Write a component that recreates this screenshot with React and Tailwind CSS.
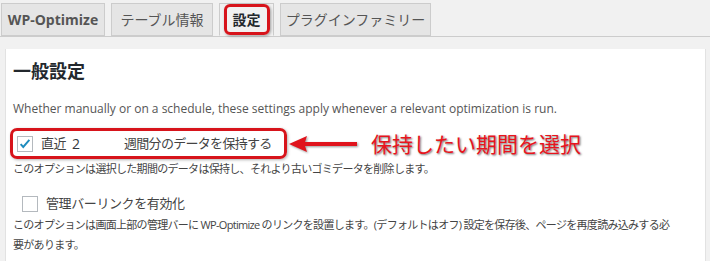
import { useState } from "react";

const jp = { fontFamily: '"Open Sans", "Noto Sans CJK JP", sans-serif' };

function Tab({ label, active, width, bold }) {
  return (
    <div
      className={`flex h-[33px] items-center justify-center border border-[#cccccc] text-[14px] ${
        active ? "border-b-[#f1f1f1] bg-[#f1f1f1] text-[#23282d]" : "bg-[#e5e5e5] text-[#555555]"
      } ${bold ? "font-bold" : ""}`}
      style={{ width }}
    >
      {active ? (
        <span className="rounded-[6px] border-[3px] border-[#d7141b] px-[6px] py-[2px] font-bold shadow-[1px_1px_3px_rgba(0,0,0,0.35)]">
          {label}
        </span>
      ) : (
        label
      )}
    </div>
  );
}

function Check({ on, toggle }) {
  return (
    <button
      onClick={toggle}
      className="flex h-[16px] w-[16px] shrink-0 items-center justify-center border border-[#b4b9be] bg-white"
    >
      {on && (
        <svg viewBox="0 0 16 16" className="h-[14px] w-[14px]">
          <path d="M3 8.2l3 3.2 7-8" fill="none" stroke="#1e8cbe" strokeWidth="2.2" />
        </svg>
      )}
    </button>
  );
}

function App() {
  const [weeks, setWeeks] = useState("2");
  const [keep, setKeep] = useState(true);
  const [adminBar, setAdminBar] = useState(false);

  return (
    <div className="h-[261px] w-[710px] overflow-hidden bg-[#f1f1f1]" style={jp}>
      {/* tabs */}
      <div className="flex h-[37px] items-end gap-[6px] border-b border-[#cccccc] pl-[1px]">
        <Tab label="WP-Optimize" width={104} bold />
        <Tab label="テーブル情報" width={102} />
        <Tab label="設定" width={55} active />
        <Tab label="プラグインファミリー" width={151} />
      </div>

      <div className="ml-[5px] mr-[4px] mt-[12px] h-[220px] border-l border-r border-[#e2e2e2] bg-white pl-[7px] pr-[6px]">
        <h2 className="pt-[10px] text-[18px] font-bold leading-[24px] text-[#23282d]">一般設定</h2>

        <p className="mt-[17px] text-[12px] leading-[18px] text-[#555555]">
          Whether manually or on a schedule, these settings apply whenever a relevant optimization is run.
        </p>

        <div className="mt-[10px] flex items-center whitespace-nowrap">
          <div className="-ml-[3px] flex h-[31px] w-[277px] shrink-0 items-center rounded-[7px] border-[3px] border-[#d7141b] pl-[4px] shadow-[1px_1px_3px_rgba(0,0,0,0.3)]">
            <Check on={keep} toggle={() => setKeep(!keep)} />
            <span className="ml-[8px] text-[13px] tracking-[-0.5px] text-[#444444]">直近</span>
            <input
              value={weeks}
              onChange={(e) => setWeeks(e.target.value)}
              className="ml-[3px] h-[24px] w-[54px] shrink-0 border-0 bg-white px-[3px] text-[14px] text-[#32373c] outline-none"
            />
            <span className="ml-[1px] text-[13px] tracking-[-0.7px] text-[#444444]">週間分のデータを保持する</span>
          </div>

          <svg width="74" height="20" viewBox="0 0 74 20" className="shrink-0 drop-shadow-[1px_1px_1px_rgba(0,0,0,0.4)]">
            <path d="M2 10 L20 2 L18 8 L70 8 L70 12 L18 12 L20 18 Z" fill="#e0141d" />
          </svg>

          <span className="ml-[10px] text-[21px] leading-[28px] text-[#e8141d] [text-shadow:1px_1px_2px_rgba(0,0,0,0.55)]">
            保持したい期間を選択
          </span>
        </div>

        <p className="mt-[1px] text-[11px] leading-[18px] tracking-[-0.7px] text-[#444444]">
          このオプションは選択した期間のデータは保持し、それより古いゴミデータを削除します。
        </p>

        <div className="mt-[16px] flex items-center pl-[9px]">
          <Check on={adminBar} toggle={() => setAdminBar(!adminBar)} />
          <span className="ml-[8px] text-[13px] tracking-[-0.4px] text-[#444444]">管理バーリンクを有効化</span>
        </div>

        <p className="mt-[1px] pr-[22px] text-[11px] leading-[20px] tracking-[-0.7px] text-[#444444]">
          このオプションは画面上部の管理バーに WP-Optimize のリンクを設置します。(デフォルトはオフ) 設定を保存後、ページを再度読み込みする必要があります。
        </p>

        <div className="ml-[4px] mt-[9px] border-t border-[#dddddd]" />
      </div>
    </div>
  );
}

export default App;
